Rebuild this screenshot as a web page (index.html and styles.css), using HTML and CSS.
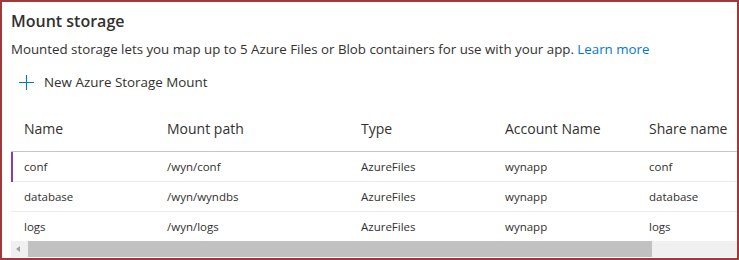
FILE: index.html
```html
<!DOCTYPE html>
<html>
<head>
    <link rel="stylesheet" href="styles.css">
</head>
<body>
    <div class="panel">
        <h2 class="title">Mount storage</h2>
        <p class="description">Mounted storage lets you map up to 5 Azure Files or Blob containers for use with your app. <a href="#" class="link">Learn more</a></p>
        <button class="add-button">
            <svg class="plus" width="15" height="15" viewBox="0 0 15 15"><path d="M7.5 0v15M0 7.5h15" stroke="#0078d4" stroke-width="1.1" fill="none"/></svg>
            <span>New Azure Storage Mount</span>
        </button>
        <div class="grid-wrap">
            <div class="grid">
                <div class="row header">
                    <div class="cell c1">Name</div>
                    <div class="cell c2">Mount path</div>
                    <div class="cell c3">Type</div>
                    <div class="cell c4">Account Name</div>
                    <div class="cell c5">Share name</div>
                </div>
                <div class="row selected">
                    <div class="cell c1">conf</div>
                    <div class="cell c2">/wyn/conf</div>
                    <div class="cell c3">AzureFiles</div>
                    <div class="cell c4">wynapp</div>
                    <div class="cell c5">conf</div>
                </div>
                <div class="row">
                    <div class="cell c1">database</div>
                    <div class="cell c2">/wyn/wyndbs</div>
                    <div class="cell c3">AzureFiles</div>
                    <div class="cell c4">wynapp</div>
                    <div class="cell c5">database</div>
                </div>
                <div class="row">
                    <div class="cell c1">logs</div>
                    <div class="cell c2">/wyn/logs</div>
                    <div class="cell c3">AzureFiles</div>
                    <div class="cell c4">wynapp</div>
                    <div class="cell c5">logs</div>
                </div>
            </div>
            <div class="scrollbar">
                <div class="arrow"></div>
                <div class="thumb"></div>
            </div>
        </div>
    </div>
</body>
</html>
```

FILE: styles.css
```css
body {
    margin: 0;
    font-family: "Segoe UI", "Open Sans", sans-serif;
    color: #323130;
    background: white;
}
.panel {
    width: 739px;
    height: 260px;
    box-sizing: border-box;
    border: 2px solid #a4373a;
    padding: 8px 0 0 9px;
    overflow: hidden;
}
.title {
    margin: 0;
    font-size: 16px;
    font-weight: 600;
    line-height: 22px;
}
.description {
    margin: 7px 0 0 0;
    font-size: 13.3px;
    line-height: 20px;
}
.link {
    color: #0078d4;
    text-decoration: none;
}
.add-button {
    display: flex;
    align-items: center;
    gap: 10px;
    margin: 14px 0 0 8px;
    padding: 0;
    border: none;
    background: none;
    font-family: inherit;
    font-size: 13.4px;
    color: #323130;
}
.grid-wrap {
    margin-top: 21px;
    overflow: hidden;
}
.grid {
    width: 760px;
}
.row {
    display: flex;
    height: 30px;
    box-sizing: border-box;
    align-items: center;
    border-bottom: 1px solid #edebe9;
    font-size: 11.5px;
    position: relative;
}
.row.header {
    height: 40px;
    padding-top: 7px;
    border-bottom: 1px solid #c8c6c4;
    font-size: 14px;
    align-items: flex-start;
}
.row.selected::before {
    content: "";
    position: absolute;
    left: 0;
    top: 0;
    bottom: -1px;
    width: 2px;
    background: #8b3ca8;
}
.cell {
    flex: none;
    box-sizing: border-box;
}
.c1 { width: 156px; padding-left: 13px; }
.c2 { width: 194px; }
.c3 { width: 144px; }
.c4 { width: 144px; }
.c5 { width: 122px; }
.scrollbar {
    display: flex;
    align-items: center;
    height: 16px;
    margin-top: -1px;
    background: #f0f0f0;
    position: relative;
}
.arrow {
    width: 0;
    height: 0;
    margin: 0 5px 0 5px;
    border-top: 3px solid transparent;
    border-bottom: 3px solid transparent;
    border-right: 4px solid #a3a3a3;
}
.thumb {
    width: 624px;
    height: 16px;
    margin-left: 3px;
    background: #c1c1c1;
}
```
